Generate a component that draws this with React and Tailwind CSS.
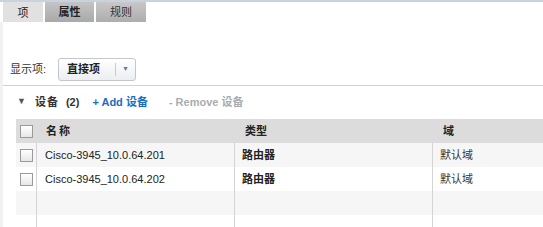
const font = { fontFamily: '"Liberation Sans", "Noto Sans CJK SC", sans-serif' };

function Checkbox() {
  return (
    <div className="w-[13px] h-[13px] border border-[#9a9a9a] bg-gradient-to-b from-white to-[#e6e6e6]" />
  );
}

const rows = [
  { name: "Cisco-3945_10.0.64.201", type: "路由器", domain: "默认域" },
  { name: "Cisco-3945_10.0.64.202", type: "路由器", domain: "默认域" },
  null,
  null,
];

export default function App() {
  return (
    <div
      className="w-[543px] h-[227px] overflow-hidden bg-white text-[11px] text-[#222] border-t-2 border-[#c9d3df]"
      style={font}
    >
      {/* tabs */}
      <div className="flex h-[20px] pl-[3px] gap-[2px]">
        <div className="w-[40px] bg-[#e1e1e1] flex items-center justify-center pt-[3px]">项</div>
        <div className="w-[49px] bg-gradient-to-b from-[#c4c4c4] to-[#a9a9a9] flex justify-center pt-[2px] font-bold">
          属性
        </div>
        <div className="w-[50px] bg-gradient-to-b from-[#c8c8c8] to-[#adadad] flex justify-center pt-[2px] text-[#333]">
          规则
        </div>
      </div>

      <div className="flex h-[205px] overflow-hidden">
        <div className="w-[3px] shrink-0 bg-[#f1f1f1]" />
        <div className="flex-1 flex flex-col">
          {/* display selector */}
          <div className="shrink-0 flex items-center h-[63px] pt-[31px] pl-[7px]">
            <span className="mr-[12px] text-[#333]">显示项:</span>
            <div className="flex items-center h-[23px] w-[78px] rounded-[3px] border border-[#c3c7cc] bg-gradient-to-b from-white to-[#eceef1]">
              <span className="pl-[8px] font-bold w-[56px]">直接项</span>
              <div className="w-px h-[13px] bg-[#c8ccd2]" />
              <span className="ml-[6px] text-[7px] text-[#5b7ea6]">▼</span>
            </div>
          </div>

          <div className="shrink-0 h-px bg-[#d2d2d2]" />

          {/* section header */}
          <div className="shrink-0 flex items-center h-[33px] pl-[14px] pb-[1px]">
            <span className="text-[9px] text-[#555] mr-[9px]">▼</span>
            <span className="font-bold text-[#333] tracking-[1px]">设备</span>
            <span className="ml-[7px] font-bold text-[#333]">(2)</span>
            <span className="ml-[13px] font-bold text-[#1b6dbf]">+ Add 设备</span>
            <span className="ml-[21px] font-bold text-[#a8adb2]">- Remove 设备</span>
          </div>

          {/* table */}
          <div className="shrink-0 ml-[13px] grid grid-cols-[21px_198px_198px_1fr]">
            <div className="h-[24px] bg-[#dcdcdc] flex items-center pl-[4px]">
              <Checkbox />
            </div>
            <div className="h-[24px] bg-[#dcdcdc] flex items-center pl-[9px] font-bold tracking-[2px]">名称</div>
            <div className="h-[24px] bg-[#dcdcdc] flex items-center pl-[10px] font-bold">类型</div>
            <div className="h-[24px] bg-[#dcdcdc] flex items-center pl-[10px] font-bold">域</div>
            {rows.map((r, i) => {
              const bg = i % 2 === 0 ? "bg-[#f6f6f6]" : "bg-white";
              return [
                <div key={`c${i}`} className={`h-[24px] ${bg} border-r border-[#d4d4d4] flex items-center pl-[4px]`}>
                  {r && <Checkbox />}
                </div>,
                <div key={`n${i}`} className={`h-[24px] ${bg} border-r border-[#d4d4d4] flex items-center pl-[8px] text-[#222]`}>
                  {r && r.name}
                </div>,
                <div key={`t${i}`} className={`h-[24px] ${bg} border-r border-[#d4d4d4] flex items-center pl-[7px] font-bold`}>
                  {r && r.type}
                </div>,
                <div key={`d${i}`} className={`h-[24px] ${bg} flex items-center pl-[7px] text-[#333]`}>
                  {r && r.domain}
                </div>,
              ];
            })}
          </div>
        </div>
      </div>
    </div>
  );
}
